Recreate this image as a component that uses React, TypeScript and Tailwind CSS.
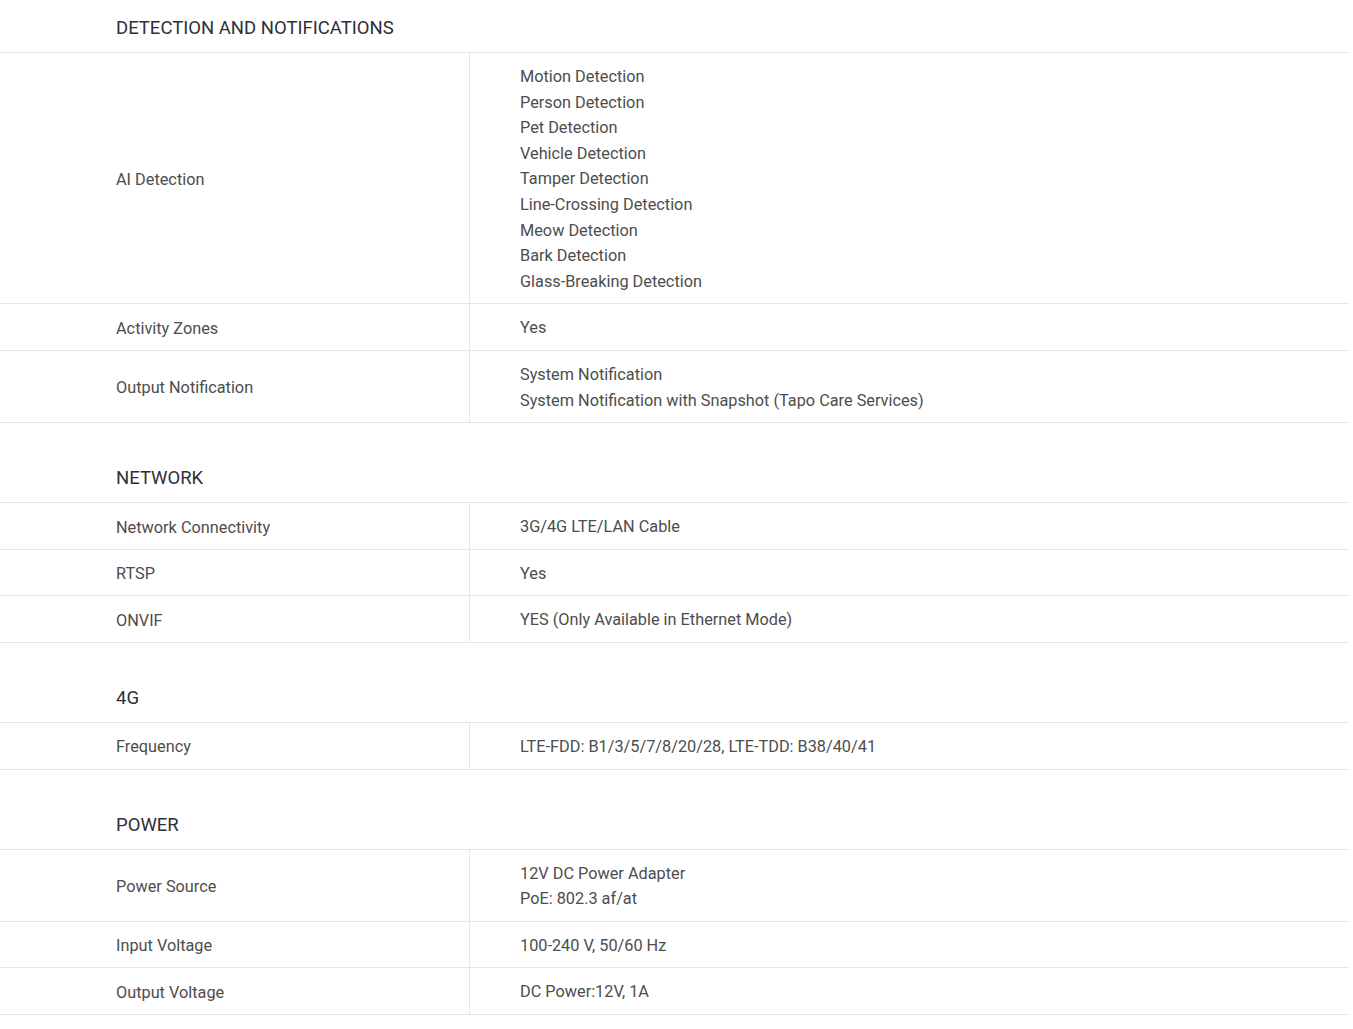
import React from "react";

type Row = { label: string; values: string[] };
type Section = { title: string; rows: Row[] };

const sections: Section[] = [
  {
    title: "DETECTION AND NOTIFICATIONS",
    rows: [
      {
        label: "AI Detection",
        values: [
          "Motion Detection",
          "Person Detection",
          "Pet Detection",
          "Vehicle Detection",
          "Tamper Detection",
          "Line-Crossing Detection",
          "Meow Detection",
          "Bark Detection",
          "Glass-Breaking Detection",
        ],
      },
      { label: "Activity Zones", values: ["Yes"] },
      {
        label: "Output Notification",
        values: ["System Notification", "System Notification with Snapshot (Tapo Care Services)"],
      },
    ],
  },
  {
    title: "NETWORK",
    rows: [
      { label: "Network Connectivity", values: ["3G/4G LTE/LAN Cable"] },
      { label: "RTSP", values: ["Yes"] },
      { label: "ONVIF", values: ["YES (Only Available in Ethernet Mode)"] },
    ],
  },
  {
    title: "4G",
    rows: [{ label: "Frequency", values: ["LTE-FDD: B1/3/5/7/8/20/28, LTE-TDD: B38/40/41"] }],
  },
  {
    title: "POWER",
    rows: [
      { label: "Power Source", values: ["12V DC Power Adapter", "PoE: 802.3 af/at"] },
      { label: "Input Voltage", values: ["100-240 V, 50/60 Hz"] },
      { label: "Output Voltage", values: ["DC Power:12V, 1A"] },
    ],
  },
];

export default function App() {
  return (
    <div
      className="w-[1353px] min-h-[1029px] bg-white"
      style={{ fontFamily: "Roboto, 'Liberation Sans', Arial, sans-serif" }}
    >
      <div className="w-[1349px]">
        {sections.map((s, i) => (
          <div key={s.title} className={i === 0 ? "" : "mt-[27px]"}>
            <div className="h-[53px] border-b border-[#e6e6e6] pl-[116px] pt-[16px] text-[18.5px] leading-[24px] text-[#2f2f37]">
              {s.title}
            </div>
            {s.rows.map((r) => (
              <div key={r.label} className="flex border-b border-[#e6e6e6] text-[16.3px] leading-[25.6px] text-[#4d4d4d]">
                <div className="w-[470px] shrink-0 border-r border-[#e6e6e6] pl-[116px] pt-[3px] flex items-center">
                  {r.label}
                </div>
                <div className="flex-1 pl-[50px] pt-[11px] pb-[9px]">
                  {r.values.map((v) => (
                    <div key={v}>{v}</div>
                  ))}
                </div>
              </div>
            ))}
          </div>
        ))}
      </div>
    </div>
  );
}
